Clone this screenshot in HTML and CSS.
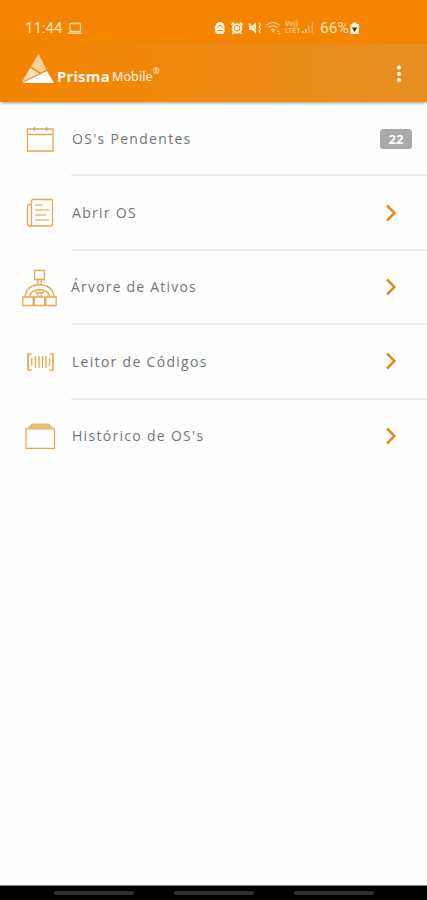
FILE: index.html
```html
<!DOCTYPE html>
<html lang="pt-BR">
<head>
  <meta charset="UTF-8">
  <meta name="viewport" content="width=device-width, initial-scale=1.0">
  <title>Prisma Mobile</title>
  <link rel="stylesheet" href="styles.css">
</head>
<body>

  <div class="status-bar">
    <span class="clock">11:44</span>
    <svg class="laptop" width="16" height="13" viewBox="0 0 16 13">
      <rect x="3" y="1.5" width="10.5" height="8" rx="1"/>
      <path d="M0.8 11.2h14.4"/>
    </svg>
    <div class="status-icons">
      <svg width="145" height="16" viewBox="0 0 145 16">
        <!-- app -->
        <path class="fill" d="M2.5 3.5L4.5 2h3l2 1.5 1 3V12L9 14H3L1 12V6.500z"/>
        <path class="cut" d="M3.500 7l2.500-2 2.500 2M3.500 10.500h5"/>
        <!-- alarm -->
        <circle class="fill" cx="23" cy="8.500" r="5.300"/>
        <path class="line thick" d="M17.500 5l2.500-2.500M26 2.500L28.500 5M20 12l-1.500 2M26 12l1.500 2"/>
        <circle class="cut" cx="23" cy="8.300" r="2.800"/>
        <path class="line" d="M23 6.500v2h1.500"/>
        <!-- mute + vibrate -->
        <path class="fill" d="M35 6h3l4-3.500v11L38 10h-3z"/>
        <path class="cut" d="M36 3l6 7.500"/>
        <path class="line thick" d="M35 3.500l6 7"/>
        <path class="line" d="M45 3l1.500 2L45 7l1.500 2L45 11l1.500 2"/>
        <!-- wifi -->
        <path class="line soft" d="M52.500 5q6.500-5 13 0M54.500 7.500q4.500-3.500 9 0M57 10q2-1.500 4 0"/>
        <path class="fill soft" d="M57.500 10.500h3L59 12.500zM63 12l1.500-2 1.500 2zM64 13h3l-1.500 1.500z"/>
        <!-- signal -->
        <path class="fill soft" d="M88 13v-2h1.500v2zM91 13V9h1.500v4z"/>
        <path class="fill dim" d="M94 13V5.500h1.500V13zM97.500 13V2.500H99V13z"/>
        <!-- battery -->
        <path class="fill" d="M138.500 4V2.500h4V4h2.500v10h-8.500V4z"/>
        <path class="bolt" d="M138 7.500h5.200l-2.600 4.500z"/>
      </svg>
      <span class="volte">Vo))<br>LTE1</span>
      <span class="percent">66%</span>
    </div>
  </div>

  <header class="toolbar">
    <svg class="logo" width="33" height="30" viewBox="0 0 33 30">
      <path fill="#fff" d="M0 29L25 17l7 12z"/>
      <path fill="#fbe0b8" d="M0 28L8.500 13.500 18 20z"/>
      <path fill="#fdd09a" d="M9 12.500L16.500 0l8 15.500L19 19z"/>
      <path fill="none" stroke="#f08a14" stroke-width=".8" d="M0 28.500L25 16M8.500 13.300L19 19"/>
    </svg>
    <span class="brand">Prisma</span>
    <span class="brand-sub">Mobile</span>
    <span class="reg">®</span>
    <svg class="more" width="6" height="18" viewBox="0 0 6 18">
      <circle cx="3" cy="2.700" r="2.100"/>
      <circle cx="3" cy="8.900" r="2.100"/>
      <circle cx="3" cy="15" r="2.100"/>
    </svg>
  </header>

  <main class="menu">
    <div class="item">
      <div class="icon">
        <svg width="36" height="40" viewBox="0 0 36 40">
          <path d="M5.500 10h25.500v22h-25.500zM5.500 15.500h25M12.500 8v4M24.500 8v4"/>
        </svg>
      </div>
      <div class="row">
        <span class="label">OS's Pendentes</span>
        <span class="badge">22</span>
      </div>
    </div>

    <div class="item">
      <div class="icon">
        <svg width="36" height="40" viewBox="0 0 36 40">
          <path d="M9.500 30V8q0-1.500 1.500-1.500h18q1.500 0 1.500 1.500v23q0 2-2 2H8q-2.500 0-2.500-2.500V13q0-1.500 2-1.500h2v19q0 2.500-2 2.500"/>
          <path class="text-lines" d="M13 12h8M13 17h14.500M13 22h11M13 27h14.500"/>
        </svg>
      </div>
      <div class="row">
        <span class="label">Abrir OS</span>
        <svg class="arrow" width="12" height="18" viewBox="0 0 12 18"><path d="M2 1.500L9.500 9 2 16.500"/></svg>
      </div>
    </div>

    <div class="item">
      <div class="icon">
        <svg width="36" height="40" viewBox="0 0 36 40">
          <path d="M12.700 2.500h9.600v9h-9.600zM15.800 11.500V17M19.200 11.500V17"/>
          <path d="M3 29q1-11.500 14.500-12.500Q31 17.500 32 29M7 29q2-7 10.500-7.500 8.500.5 10.500 7.500"/>
          <path d="M13 24.500h9M15.800 24.500v4.500M19.200 24.500v4.500"/>
          <path d="M.8 29h10.400v8.500H.8zM12.300 29h10.400v8.500H12.300zM23.800 29h10.400v8.500H23.800z"/>
        </svg>
      </div>
      <div class="row">
        <span class="label arvore">Árvore de Ativos</span>
        <svg class="arrow" width="12" height="18" viewBox="0 0 12 18"><path d="M2 1.500L9.500 9 2 16.500"/></svg>
      </div>
    </div>

    <div class="item">
      <div class="icon">
        <svg width="36" height="40" viewBox="0 0 36 40">
          <path class="bold" d="M9.500 12H6v16h3.500M27.500 12H31v16h-3.500"/>
          <path d="M9.800 16v8M13.500 14v12M17 14v12M20.500 14v12M24 14v12M27.500 16v8"/>
        </svg>
      </div>
      <div class="row">
        <span class="label">Leitor de Códigos</span>
        <svg class="arrow" width="12" height="18" viewBox="0 0 12 18"><path d="M2 1.500L9.500 9 2 16.500"/></svg>
      </div>
    </div>

    <div class="item">
      <div class="icon">
        <svg width="36" height="40" viewBox="0 0 36 40">
          <path d="M4 11.800h28.500v19.500H4z"/>
          <path class="lid" d="M4.500 11.500L10 6.500h17l5 5z"/>
        </svg>
      </div>
      <div class="row">
        <span class="label">Histórico de OS's</span>
        <svg class="arrow" width="12" height="18" viewBox="0 0 12 18"><path d="M2 1.500L9.500 9 2 16.500"/></svg>
      </div>
    </div>
  </main>

  <footer class="nav-bar">
    <span></span>
    <span></span>
    <span></span>
  </footer>

</body>
</html>
```
FILE: styles.css
```css
* {
  box-sizing: border-box;
}

body {
  margin: 0;
  height: 900px;
  display: flex;
  flex-direction: column;
  background: #fefefe;
  font-family: "Open Sans", sans-serif;
  overflow: hidden;
}

.status-bar {
  height: 44px;
  flex: none;
  display: flex;
  align-items: center;
  padding: 12px 66px 0 25px;
  background: #f58400;
  color: #ffe5bd;
  font-family: Roboto, sans-serif;
  font-size: 15px;
}

.clock {
  width: 42px;
}

.laptop {
  fill: none;
  stroke: #ffe0b0;
  stroke-width: 1.300;
}

.status-icons {
  position: relative;
  display: flex;
  margin-left: auto;
  width: 147px;
}

.status-icons svg {
  fill: none;
}

.status-icons .fill {
  fill: #fff1d8;
}

.status-icons .line {
  stroke: #fff1d8;
  stroke-width: 1.200;
}

.status-icons .thick {
  stroke-width: 1.800;
}

.status-icons .cut {
  stroke: #f58400;
  stroke-width: 1;
}

.status-icons .soft {
  opacity: .75;
}

.status-icons .dim {
  opacity: .4;
}

.status-icons .bolt {
  fill: #3c3424;
}

.volte {
  position: absolute;
  left: 71px;
  top: 1px;
  font-size: 7px;
  font-weight: bold;
  line-height: 7px;
  opacity: .7;
}

.percent {
  position: absolute;
  left: 106px;
  top: -1px;
  font-size: 15.500px;
  line-height: 18px;
}

.toolbar {
  height: 58px;
  flex: none;
  display: flex;
  align-items: flex-end;
  padding: 0 25px 18px 22px;
  background: linear-gradient(90deg, #f38400, #ef8910 45%, #e68f22);
  box-shadow: 0 2px 3px -1px rgba(80, 80, 80, .6);
  color: #fff8ec;
}

.brand {
  margin-left: 2px;
  width: 55px;
  font-family: "Noto Sans", sans-serif;
  font-size: 15px;
  font-weight: bold;
  letter-spacing: .2px;
  line-height: 16px;
}

.brand-sub {
  width: 41px;
  font-family: "Noto Sans", sans-serif;
  font-size: 12.500px;
  letter-spacing: .1px;
  line-height: 14px;
}

.reg {
  align-self: flex-start;
  margin-top: 22px;
  font-size: 8px;
  font-weight: bold;
  line-height: 10px;
  opacity: .8;
}

.more {
  margin-left: auto;
  margin-bottom: 1px;
  fill: #fff8ec;
}

.menu {
  flex: 1;
}

.item {
  display: flex;
  height: 74.400px;
}

.icon {
  width: 49px;
  margin-left: 22px;
  padding-top: 17px;
}

.icon svg {
  display: block;
  fill: none;
  stroke: #e3a94f;
  stroke-width: 1.300;
}

.icon .bold {
  stroke-width: 1.700;
}

.icon .text-lines {
  stroke: #ebbf7c;
}

.icon .lid {
  fill: #e8bd78;
  stroke: none;
}

.row {
  flex: 1;
  display: flex;
  align-items: center;
  justify-content: space-between;
  padding-right: 30px;
  border-bottom: 2px solid #f0f0f0;
}

.item:first-child .row {
  padding-right: 15px;
  padding-top: 1px;
}

.item:last-child .row {
  border-color: transparent;
}

.label {
  padding-left: 1px;
  color: #6f7777;
  font-size: 14px;
  letter-spacing: 1.300px;
  white-space: nowrap;
}

.arvore {
  padding-left: 0;
  letter-spacing: 1.200px;
}

.badge {
  width: 32px;
  height: 20px;
  border-radius: 3px;
  background: #aaa;
  color: #fff;
  font-size: 13px;
  font-weight: bold;
  line-height: 20px;
  text-align: center;
}

.arrow {
  fill: none;
  stroke: #e18c1d;
  stroke-width: 2.500;
}

.nav-bar {
  height: 15px;
  flex: none;
  display: flex;
  justify-content: center;
  gap: 40px;
  padding-top: 5px;
  border-top: 1px solid #7d8280;
  background: #000;
}

.nav-bar span {
  width: 80px;
  height: 4px;
  border-radius: 2px;
  background: #303030;
}
```
